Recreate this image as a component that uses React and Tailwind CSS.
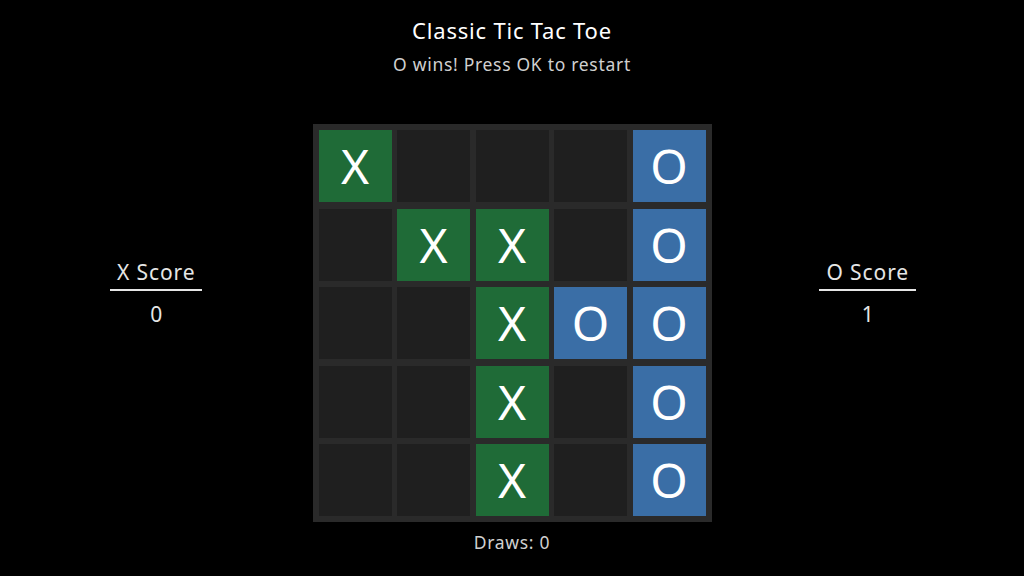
const board = [
  ['X', '', '', '', 'O'],
  ['', 'X', 'X', '', 'O'],
  ['', '', 'X', 'O', 'O'],
  ['', '', 'X', '', 'O'],
  ['', '', 'X', '', 'O'],
];

function Cell({ value }) {
  let tone = 'bg-[#1f1f1f]';
  if (value === 'X') tone = 'bg-[#1f6b37]';
  if (value === 'O') tone = 'bg-[#3a6ea6]';
  return (
    <div className={`w-[73px] h-[72px] flex items-center justify-center text-white text-[48px] leading-none ${tone}`}>
      {value}
    </div>
  );
}

function Score({ label, value }) {
  return (
    <div className="flex flex-col items-center pt-[134px] text-[#e6e6e6]">
      <span className="px-[7px] pb-[3px] border-b-2 border-[#e6e6e6] text-[21px] leading-7 tracking-[0.9px]">{label}</span>
      <span className="mt-[9px] text-[21px] leading-7">{value}</span>
    </div>
  );
}

export default function App() {
  return (
    <div
      className="w-[1024px] h-[576px] bg-black flex flex-col items-center overflow-hidden"
      style={{ fontFamily: '"Noto Sans", "Open Sans", sans-serif' }}
    >
      <h1 className="mt-[14px] text-[22px] leading-8 text-white tracking-[0.8px]">Classic Tic Tac Toe</h1>
      <p className="mt-[6px] text-[17.5px] leading-6 text-[#d0d0d0] tracking-[0.7px]">O wins! Press OK to restart</p>
      <div className="mt-[48px] w-full grid grid-cols-[1fr_auto_1fr]">
        <Score label="X Score" value="0" />
        <div className="bg-[#2a2a2a] p-[6px] grid grid-cols-5 gap-x-[5.5px] gap-y-[6.5px]">
          {board.map((row, r) =>
            row.map((v, c) => <Cell key={`${r}-${c}`} value={v} />)
          )}
        </div>
        <Score label="O Score" value="1" />
      </div>
      <p className="mt-[8px] text-[17.5px] leading-6 text-[#d0d0d0] tracking-[0.7px]">Draws: 0</p>
    </div>
  );
}
